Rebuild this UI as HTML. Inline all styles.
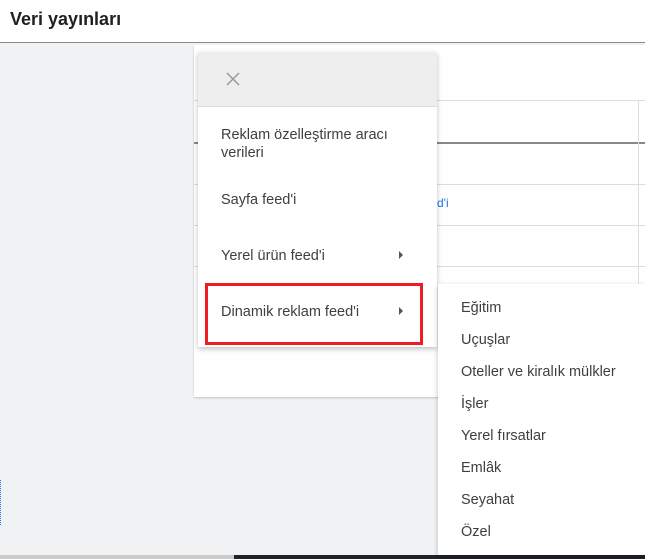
<!DOCTYPE html>
<html><head><style>
*{margin:0;padding:0;box-sizing:border-box}
body{width:645px;height:559px;overflow:hidden;background:#f1f2f4;font-family:"Liberation Sans",sans-serif;position:relative;color:#333}
.a{position:absolute}
</style></head><body>
<div class="a" style="left:0;top:0;width:645px;height:43px;background:#fff;border-bottom:1px solid #888"></div>
<div class="a" style="left:10px;top:9px;font-size:18px;font-weight:bold;color:#202124">Veri yayınları</div>
<div class="a" style="left:194px;top:45px;width:451px;height:352px;background:#fff;box-shadow:0 1px 2px rgba(0,0,0,.2)"></div>
<div class="a" style="left:194px;top:100px;width:451px;height:1px;background:#ddd"></div>
<div class="a" style="left:194px;top:142px;width:451px;height:2px;background:#888"></div>
<div class="a" style="left:194px;top:184px;width:451px;height:1px;background:#ddd"></div>
<div class="a" style="left:194px;top:225px;width:451px;height:1px;background:#ddd"></div>
<div class="a" style="left:194px;top:266px;width:451px;height:1px;background:#ddd"></div>
<div class="a" style="left:638px;top:100px;width:1px;height:297px;background:#ddd"></div>
<div class="a" style="left:437px;top:196px;font-size:12px;color:#1a73e8">d'i</div>
<div class="a" style="left:0;top:480px;width:2px;height:45px;border-left:1px dotted #1a73e8"></div>
<div class="a" style="left:0;top:555px;width:234px;height:4px;background:#ccc"></div>
<div class="a" style="left:234px;top:555px;width:411px;height:4px;background:#1e2328"></div>
<div class="a" style="left:198px;top:52px;width:239px;height:295px;background:#fff;box-shadow:0 2px 5px rgba(0,0,0,.25)">
 <div style="height:55px;background:#eeeeee;border-bottom:1px solid #ddd;position:relative">
  <svg class="a" style="left:28px;top:20px" width="14" height="14"><path d="M1 1L13 13M13 1L1 13" stroke="#999" stroke-width="1.5"/></svg>
 </div>
 <div class="a" style="left:23px;top:74px;font-size:14.5px;line-height:18px;color:#3c4043">Reklam özelleştirme aracı<br>verileri</div>
 <div class="a" style="left:23px;top:140px;font-size:14.5px;color:#3c4043">Sayfa feed'i</div>
 <div class="a" style="left:23px;top:196px;font-size:14.5px;color:#3c4043">Yerel ürün feed'i</div>
 <div class="a" style="left:201px;top:199px;width:0;height:0;border-left:4px solid #555;border-top:4px solid transparent;border-bottom:4px solid transparent"></div>
 <div class="a" style="left:23px;top:252px;font-size:14.5px;color:#3c4043">Dinamik reklam feed'i</div>
 <div class="a" style="left:201px;top:255px;width:0;height:0;border-left:4px solid #555;border-top:4px solid transparent;border-bottom:4px solid transparent"></div>
</div>
<div class="a" style="left:205px;top:283px;width:218px;height:62px;border:3px solid #ee1c25"></div>
<div class="a" style="left:438px;top:284px;width:207px;height:271px;background:#fff;box-shadow:0 2px 5px rgba(0,0,0,.25);font-size:14.5px;color:#3c4043">
 <div class="a" style="left:23px;top:16px">Eğitim</div>
 <div class="a" style="left:23px;top:48px">Uçuşlar</div>
 <div class="a" style="left:23px;top:80px">Oteller ve kiralık mülkler</div>
 <div class="a" style="left:23px;top:112px">İşler</div>
 <div class="a" style="left:23px;top:144px">Yerel fırsatlar</div>
 <div class="a" style="left:23px;top:176px">Emlâk</div>
 <div class="a" style="left:23px;top:208px">Seyahat</div>
 <div class="a" style="left:23px;top:240px">Özel</div>
</div>
</body></html>
